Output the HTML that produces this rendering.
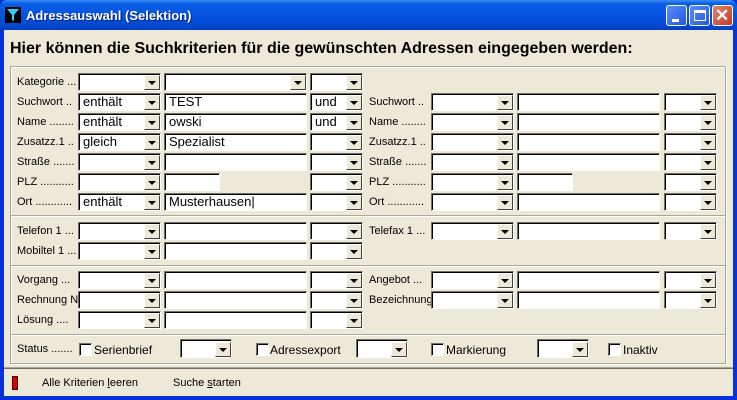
<!DOCTYPE html>
<html><head><meta charset="utf-8"><style>
*{margin:0;padding:0;box-sizing:border-box}
body{width:737px;height:400px;overflow:hidden;background:#0831d9;font-family:"Liberation Sans",sans-serif;font-size:11px;position:relative}
#tb{position:absolute;left:0;top:0;width:737px;height:30px;background:linear-gradient(#3a8cf5 0%,#0a5fe6 12%,#0553e0 50%,#0448d0 85%,#0340c0 100%);border-radius:7px 7px 0 0}
#tt{position:absolute;left:26px;top:8px;color:#fff;font-weight:bold;font-size:13px;text-shadow:1px 1px #0a1e7a}
.wb{position:absolute;top:5px;width:21px;height:21px;border:1px solid #fff;border-radius:3px;background:linear-gradient(135deg,#5a8cf8,#2459e0)}
#cl{position:absolute;left:4px;top:30px;width:729px;height:366px;background:#ece9d8}
.a{position:absolute}
#h{left:6px;top:10px;font-size:16px;font-weight:bold;color:#000}
#g{left:6px;top:36px;width:716px;height:298px;border:1px solid #aca899;box-shadow:inset 1px 1px #fff,1px 1px #fff}
.sep{position:absolute;left:7px;width:714px;height:2px;border-top:1px solid #aca899;border-bottom:1px solid #fff}
.l{position:absolute;font-size:11px;color:#000;white-space:nowrap}
.c,.t{position:absolute;height:18px;background:#fff;border-top:1px solid #716f64;border-left:1px solid #716f64;border-bottom:1px solid #fff;border-right:1px solid #fff;box-shadow:inset 1px 1px #000;font-size:13px;line-height:16px;padding-left:4px;white-space:nowrap;overflow:hidden}
.c .b{position:absolute;right:0;top:1px;width:16px;height:15px;background:#ece9d8;border-top:1px solid #fff;border-left:1px solid #fff;border-right:1px solid #404040;border-bottom:1px solid #404040}
.c .b:after{content:"";position:absolute;left:3px;top:5px;border-left:4px solid transparent;border-right:4px solid transparent;border-top:4px solid #000}
.cb{position:absolute;width:13px;height:13px;background:#fff;border-top:1px solid #716f64;border-left:1px solid #716f64;border-bottom:1px solid #fff;border-right:1px solid #fff;box-shadow:inset 1px 1px #000}
.w1{width:83px}.w2{width:143px}.w3{width:53px}
</style></head><body>
<div id="tb">
<svg style="position:absolute;left:5px;top:7px" width="16" height="16"><rect width="16" height="16" fill="#000"/><path d="M2 2h12l-5 6v6l-2-1V8z" fill="#3cf"/></svg>
<div id="tt">Adressauswahl (Selektion)</div>
<div class="wb" style="left:666px"><div style="position:absolute;left:5px;top:13px;width:7px;height:3px;background:#fff"></div></div>
<div class="wb" style="left:689px"><div style="position:absolute;left:4px;top:4px;width:12px;height:11px;border:1px solid #fff;border-top:3px solid #fff"></div></div>
<div class="wb" style="left:712px;background:linear-gradient(135deg,#e08868,#c0392b)"><div style="position:absolute;left:2px;top:0;color:#fff;font-size:17px;font-weight:bold;line-height:19px">✕</div></div>
</div>
<div id="cl">
<div class="a" id="h">Hier können die Suchkriterien für die gewünschten Adressen eingegeben werden:</div>
<div class="a" id="g"></div>
<div class="sep" style="top:185px"></div>
<div class="sep" style="top:235px"></div>
<div class="sep" style="top:304px"></div>
</div>
<div style="position:absolute;left:0;top:0">
<!-- left labels (absolute to body) -->
<div class="l" style="left:17px;top:76px">Kategorie ...</div>
<div class="l" style="left:17px;top:96px">Suchwort ..</div>
<div class="l" style="left:17px;top:116px">Name ........</div>
<div class="l" style="left:17px;top:136px">Zusatzz.1 ..</div>
<div class="l" style="left:17px;top:156px">Straße .......</div>
<div class="l" style="left:17px;top:176px">PLZ ...........</div>
<div class="l" style="left:17px;top:196px">Ort ............</div>
<div class="l" style="left:17px;top:225px">Telefon 1 ...</div>
<div class="l" style="left:17px;top:245px">Mobiltel 1 ...</div>
<div class="l" style="left:17px;top:274px">Vorgang ...</div>
<div class="l" style="left:17px;top:294px">Rechnung Nr</div>
<div class="l" style="left:17px;top:314px">Lösung ....</div>
<div class="l" style="left:17px;top:343px">Status .......</div>

<div class="c w1" style="left:78px;top:73px"><span class="b"></span></div>
<div class="c w2" style="left:164px;top:73px"><span class="b"></span></div>
<div class="c w3" style="left:310px;top:73px"><span class="b"></span></div>

<div class="c w1" style="left:78px;top:93px">enthält<span class="b"></span></div>
<div class="t w2" style="left:164px;top:93px">TEST</div>
<div class="c w3" style="left:310px;top:93px">und<span class="b"></span></div>
<div class="c w1" style="left:78px;top:113px">enthält<span class="b"></span></div>
<div class="t w2" style="left:164px;top:113px">owski</div>
<div class="c w3" style="left:310px;top:113px">und<span class="b"></span></div>
<div class="c w1" style="left:78px;top:133px">gleich<span class="b"></span></div>
<div class="t w2" style="left:164px;top:133px">Spezialist</div>
<div class="c w3" style="left:310px;top:133px"><span class="b"></span></div>
<div class="c w1" style="left:78px;top:153px"><span class="b"></span></div>
<div class="t w2" style="left:164px;top:153px"></div>
<div class="c w3" style="left:310px;top:153px"><span class="b"></span></div>
<div class="c w1" style="left:78px;top:173px"><span class="b"></span></div>
<div class="t" style="left:164px;top:173px;width:56px"></div>
<div class="c w3" style="left:310px;top:173px"><span class="b"></span></div>
<div class="c w1" style="left:78px;top:193px">enthält<span class="b"></span></div>
<div class="t w2" style="left:164px;top:193px">Musterhausen|</div>
<div class="c w3" style="left:310px;top:193px"><span class="b"></span></div>

<div class="c w1" style="left:78px;top:222px"><span class="b"></span></div>
<div class="t w2" style="left:164px;top:222px"></div>
<div class="c w3" style="left:310px;top:222px"><span class="b"></span></div>
<div class="c w1" style="left:78px;top:242px"><span class="b"></span></div>
<div class="t w2" style="left:164px;top:242px"></div>
<div class="c w3" style="left:310px;top:242px"><span class="b"></span></div>

<div class="c w1" style="left:78px;top:271px"><span class="b"></span></div>
<div class="t w2" style="left:164px;top:271px"></div>
<div class="c w3" style="left:310px;top:271px"><span class="b"></span></div>
<div class="c w1" style="left:78px;top:291px"><span class="b"></span></div>
<div class="t w2" style="left:164px;top:291px"></div>
<div class="c w3" style="left:310px;top:291px"><span class="b"></span></div>
<div class="c w1" style="left:78px;top:311px"><span class="b"></span></div>
<div class="t w2" style="left:164px;top:311px"></div>
<div class="c w3" style="left:310px;top:311px"><span class="b"></span></div>

<!-- right -->
<div class="l" style="left:369px;top:96px">Suchwort ..</div>
<div class="l" style="left:369px;top:116px">Name ........</div>
<div class="l" style="left:369px;top:136px">Zusatzz.1 ..</div>
<div class="l" style="left:369px;top:156px">Straße .......</div>
<div class="l" style="left:369px;top:176px">PLZ ...........</div>
<div class="l" style="left:369px;top:196px">Ort ............</div>
<div class="l" style="left:369px;top:225px">Telefax 1 ...</div>
<div class="l" style="left:369px;top:274px">Angebot ...</div>
<div class="l" style="left:369px;top:294px">Bezeichnung</div>

<div class="c w1" style="left:431px;top:93px"><span class="b"></span></div>
<div class="t w2" style="left:517px;top:93px"></div>
<div class="c w3" style="left:664px;top:93px"><span class="b"></span></div>
<div class="c w1" style="left:431px;top:113px"><span class="b"></span></div>
<div class="t w2" style="left:517px;top:113px"></div>
<div class="c w3" style="left:664px;top:113px"><span class="b"></span></div>
<div class="c w1" style="left:431px;top:133px"><span class="b"></span></div>
<div class="t w2" style="left:517px;top:133px"></div>
<div class="c w3" style="left:664px;top:133px"><span class="b"></span></div>
<div class="c w1" style="left:431px;top:153px"><span class="b"></span></div>
<div class="t w2" style="left:517px;top:153px"></div>
<div class="c w3" style="left:664px;top:153px"><span class="b"></span></div>
<div class="c w1" style="left:431px;top:173px"><span class="b"></span></div>
<div class="t" style="left:517px;top:173px;width:56px"></div>
<div class="c w3" style="left:664px;top:173px"><span class="b"></span></div>
<div class="c w1" style="left:431px;top:193px"><span class="b"></span></div>
<div class="t w2" style="left:517px;top:193px"></div>
<div class="c w3" style="left:664px;top:193px"><span class="b"></span></div>
<div class="c w1" style="left:431px;top:222px"><span class="b"></span></div>
<div class="t w2" style="left:517px;top:222px"></div>
<div class="c w3" style="left:664px;top:222px"><span class="b"></span></div>
<div class="c w1" style="left:431px;top:271px"><span class="b"></span></div>
<div class="t w2" style="left:517px;top:271px"></div>
<div class="c w3" style="left:664px;top:271px"><span class="b"></span></div>
<div class="c w1" style="left:431px;top:291px"><span class="b"></span></div>
<div class="t w2" style="left:517px;top:291px"></div>
<div class="c w3" style="left:664px;top:291px"><span class="b"></span></div>

<!-- status row -->
<div class="cb" style="left:79px;top:343px"></div><div class="l" style="left:94px;top:343px;font-size:12px">Serienbrief</div>
<div class="c" style="left:180px;top:339px;width:52px;height:19px"><span class="b" style="top:2px"></span></div>
<div class="cb" style="left:256px;top:343px"></div><div class="l" style="left:270px;top:343px;font-size:12px">Adressexport</div>
<div class="c" style="left:356px;top:339px;width:52px;height:19px"><span class="b" style="top:2px"></span></div>
<div class="cb" style="left:431px;top:343px"></div><div class="l" style="left:446px;top:343px;font-size:12px">Markierung</div>
<div class="c" style="left:537px;top:339px;width:52px;height:19px"><span class="b" style="top:2px"></span></div>
<div class="cb" style="left:608px;top:343px"></div><div class="l" style="left:623px;top:343px;font-size:12px">Inaktiv</div>

<!-- footer -->
<div style="position:absolute;left:4px;top:367px;width:729px;height:2px;border-top:1px solid #aca899;border-bottom:1px solid #716f64"></div>
<div style="position:absolute;left:12px;top:376px;width:6px;height:14px;background:#d00;border:1px solid #400"></div>
<div class="l" style="left:42px;top:377px">Alle Kriterien <u>l</u>eeren</div>
<div class="l" style="left:173px;top:377px">Suche <u>s</u>tarten</div>
</div>
</body></html>
